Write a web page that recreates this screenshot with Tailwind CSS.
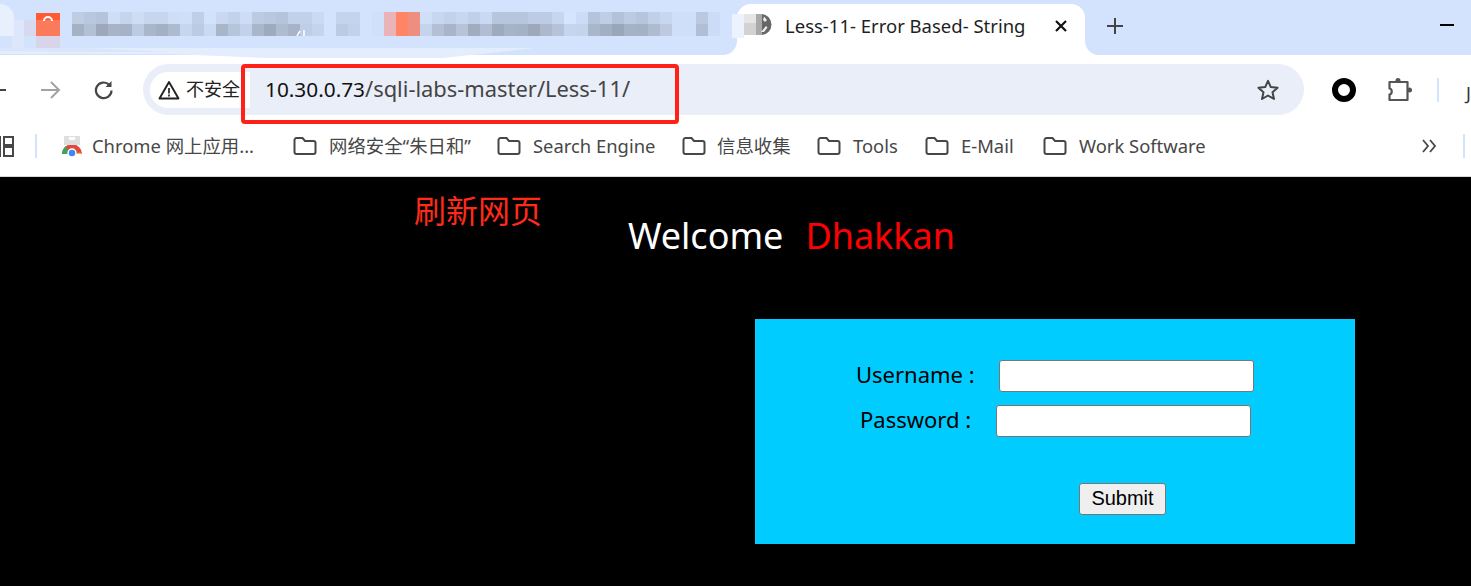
<!DOCTYPE html>
<html lang="zh">
<head>
<meta charset="utf-8">
<script src="https://cdn.jsdelivr.net/npm/@tailwindcss/browser@4"></script>
<title>Less-11</title>
</head>
<body class="relative h-[586px] w-[1471px] overflow-hidden bg-black font-['Noto_Sans','Noto_Sans_CJK_SC',sans-serif]">
<header class="flex h-[177px] flex-col bg-white">
  <!-- tab strip -->
  <div class="flex h-[55px] items-stretch bg-[#d3e3fd]">
    <div class="relative flex w-[737px] items-start pt-[12px] pl-[12px]">
      <div class="mt-[8px] h-[28px] w-[12px] bg-[#dce7fb]"></div>
      <div class="mt-[8px] h-[16px] w-[12px] bg-[#d6d9f0]"></div>
      <div class="relative mt-[1px] w-[24px]">
        <div class="h-[7px] bg-[#ff5a33]"></div>
        <div class="h-[16px] bg-[#fb7a5c]"></div>
        <div class="h-[12px] bg-[#d8d5ea]"></div>
        <svg class="absolute top-[2px] left-[7px] h-[6px] w-[10px]" viewBox="0 0 10 6"><path d="M1 6a4 4 0 0 1 8 0" fill="none" stroke="#fff" stroke-width="2"/></svg>
      </div>
      <div class="ml-[12px] w-[288px]">
        <div class="flex h-[12px]">
          <div class="w-[12px] bg-[#bfcde3]"></div><div class="w-[12px] bg-[#b9c8df]"></div><div class="w-[12px] bg-[#b5c4da]"></div><div class="w-[12px] bg-[#cfdef6]"></div><div class="w-[12px] bg-[#c5d5ec]"></div><div class="w-[12px] bg-[#cedcf4]"></div><div class="w-[12px] bg-[#c7d6ee]"></div><div class="w-[12px] bg-[#c7d6ee]"></div><div class="w-[12px] bg-[#cfdef6]"></div><div class="w-[12px] bg-[#d0dff8]"></div><div class="w-[12px] bg-[#bfcfe8]"></div><div class="w-[12px] bg-[#d3e2fb]"></div><div class="w-[12px] bg-[#c9d8f0]"></div><div class="w-[12px] bg-[#c2d2ea]"></div><div class="w-[12px] bg-[#cedcf5]"></div><div class="w-[12px] bg-[#bccbe2]"></div><div class="w-[12px] bg-[#b9c8df]"></div><div class="w-[12px] bg-[#b5c4db]"></div><div class="w-[12px] bg-[#c2d1e9]"></div><div class="w-[12px] bg-[#c2d1e9]"></div><div class="w-[12px] bg-[#cbdaf2]"></div><div class="w-[12px] bg-[#d3e3fd]"></div><div class="w-[12px] bg-[#c5d4ed]"></div><div class="w-[12px] bg-[#c5d4ed]"></div>
        </div>
        <div class="relative flex h-[12px]">
          <div class="w-[12px] bg-[#a5b2c4]"></div><div class="w-[12px] bg-[#b3c0d6]"></div><div class="w-[12px] bg-[#9da8ba]"></div><div class="w-[12px] bg-[#a7b4c8]"></div><div class="w-[12px] bg-[#a6b3c7]"></div><div class="w-[12px] bg-[#bccbe2]"></div><div class="w-[12px] bg-[#aab7cb]"></div><div class="w-[12px] bg-[#a4b1c5]"></div><div class="w-[12px] bg-[#aebbcf]"></div><div class="w-[12px] bg-[#c7d6ef]"></div><div class="w-[12px] bg-[#bccbe3]"></div><div class="w-[12px] bg-[#cbdaf3]"></div><div class="w-[12px] bg-[#a9b6ca]"></div><div class="w-[12px] bg-[#b7c5dc]"></div><div class="w-[12px] bg-[#c3d2ea]"></div><div class="w-[12px] bg-[#aab7cb]"></div><div class="w-[12px] bg-[#9eabbc]"></div><div class="w-[12px] bg-[#aebbd0]"></div><div class="w-[12px] bg-[#a7b3c6]"></div><div class="w-[12px] bg-[#bfcee6]"></div><div class="w-[12px] bg-[#c5d4ed]"></div><div class="w-[12px] bg-[#d3e3fd]"></div><div class="w-[12px] bg-[#bccbe3]"></div><div class="w-[12px] bg-[#c3d2ea]"></div>
          <svg class="absolute top-[6px] left-[224px] h-[6px] w-[10px]" viewBox="0 0 10 6"><path d="M1 6L4 1M8 0v6" fill="none" stroke="#fff" stroke-width="1.500"/></svg>
        </div>
      </div>
      <div class="ml-[12px] h-[24px] w-[12px] bg-[#d0e0fa]"></div>
      <div class="h-[24px] w-[12px] bg-[#e8b4b8]"></div>
      <div class="h-[24px] w-[12px] bg-[#ff8566]"></div>
      <div class="h-[24px] w-[12px] bg-[#ee8e80]"></div>
      <div class="w-[252px]">
        <div class="flex h-[12px]">
          <div class="w-[12px] bg-[#d0dff8]"></div><div class="w-[12px] bg-[#c8d7f0]"></div><div class="w-[12px] bg-[#c3d2ec]"></div><div class="w-[12px] bg-[#c8d7f0]"></div><div class="w-[12px] bg-[#c0d0e9]"></div><div class="w-[12px] bg-[#cad9f3]"></div><div class="w-[12px] bg-[#b7c6dd]"></div><div class="w-[12px] bg-[#b7c6dd]"></div><div class="w-[12px] bg-[#b7c6dd]"></div><div class="w-[12px] bg-[#bdcce4]"></div><div class="w-[12px] bg-[#bdcce4]"></div><div class="w-[12px] bg-[#c6d6ef]"></div><div class="w-[12px] bg-[#d6e4fd]"></div><div class="w-[12px] bg-[#cddcf6]"></div><div class="w-[12px] bg-[#b5c4da]"></div><div class="w-[12px] bg-[#bfcee6]"></div><div class="w-[12px] bg-[#b3c2d8]"></div><div class="w-[12px] bg-[#bccbe2]"></div><div class="w-[12px] bg-[#b6c5db]"></div><div class="w-[12px] bg-[#c1d0e8]"></div><div class="w-[12px] bg-[#c8d7f0]"></div>
        </div>
        <div class="flex h-[12px]">
          <div class="w-[12px] bg-[#c5d4ed]"></div><div class="w-[12px] bg-[#b2bfd5]"></div><div class="w-[12px] bg-[#a8b5c9]"></div><div class="w-[12px] bg-[#b6c3d9]"></div><div class="w-[12px] bg-[#a0adbf]"></div><div class="w-[12px] bg-[#b0bdd2]"></div><div class="w-[12px] bg-[#9eabbd]"></div><div class="w-[12px] bg-[#a7b4c8]"></div><div class="w-[12px] bg-[#a5b2c6]"></div><div class="w-[12px] bg-[#9da9bb]"></div><div class="w-[12px] bg-[#acb9cd]"></div><div class="w-[12px] bg-[#b5c2d8]"></div><div class="w-[12px] bg-[#c6d5ee]"></div><div class="w-[12px] bg-[#c5d4ed]"></div><div class="w-[12px] bg-[#aab7cb]"></div><div class="w-[12px] bg-[#a3b0c3]"></div><div class="w-[12px] bg-[#9aa7b9]"></div><div class="w-[12px] bg-[#a6b3c6]"></div><div class="w-[12px] bg-[#a5b2c5]"></div><div class="w-[12px] bg-[#aebbd0]"></div><div class="w-[12px] bg-[#bcc9e0]"></div>
        </div>
      </div>
      <div class="h-[24px] w-[24px] bg-[#d0dff9]"></div>
      <div class="w-[12px]"><div class="h-[12px] bg-[#bac9e0]"></div><div class="h-[12px] bg-[#b1bed4]"></div></div>
      <div class="h-[24px] w-[12px] bg-[#cddcf6]"></div>
      <!-- smeared edges of the blurred tabs -->
      <div class="absolute top-[4px] left-0 h-[32px] w-[14px] rounded-tr-[14px] bg-[#e8f0fe]"></div>
      <svg class="absolute top-[48px] left-0 h-[10px] w-[540px]" viewBox="0 0 540 10"><path d="M0 0H535L443 10H266L170 6H0z" fill="#e3edfd"/><path d="M0 0H85L170 4H85L0 3z" fill="#d9e5fb"/></svg>
      <div class="absolute right-0 bottom-0 h-[14px] w-[14px] bg-white"><div class="h-full w-full rounded-br-[14px] bg-[#d3e3fd]"></div></div>
    </div>
    <div class="relative mt-[4px] flex w-[348px] items-center rounded-t-[14px] bg-white pb-[7px]">
      <div class="-ml-[5px] flex h-[24px] shrink-0 items-start">
        <div class="h-[24px] w-[12px] bg-[#edf3fe]"></div>
        <div class="w-[12px]"><div class="h-[9px] bg-[#e5e5e6]"></div><div class="h-[12px] bg-[#d2d2d2]"></div></div>
        <svg class="h-[22px] w-[16px]" viewBox="0 0 16 22"><circle cx="5" cy="10.500" r="10.500" fill="#666"/><rect x="0" y="0" width="6" height="21" fill="#a9a9a9"/><path d="M8 2.500l3 3.500-2 2-2-2zM5 18l5-6 1.500 1.500L8 18z" fill="#eee"/></svg>
      </div>
      <span class="ml-[13px] w-[246px] shrink-0 text-[18.500px] leading-[22px] whitespace-nowrap text-[#1f1f1f]">Less-11- Error Based- String</span>
      <svg class="ml-[23px] h-[14px] w-[14px] shrink-0" viewBox="0 0 14 14"><path d="M2 2l10 10M12 2L2 12" stroke="#111" stroke-width="2.200"/></svg>
      <div class="absolute right-[-14px] bottom-0 h-[14px] w-[14px] bg-white"><div class="h-full w-full rounded-bl-[14px] bg-[#d3e3fd]"></div></div>
    </div>
    <svg class="mt-[17px] ml-[21px] h-[18px] w-[18px]" viewBox="0 0 18 18"><path d="M9 1v16M1 9h16" stroke="#444" stroke-width="2"/></svg>
    <div class="mt-[24px] mr-[17px] ml-auto h-[2px] w-[14px] bg-black"></div>
  </div>
  <!-- toolbar -->
  <div class="flex h-[70px] items-center pt-[9px] pb-[10px]">
    <div class="h-[2px] w-[6px] bg-[#444]"></div>
    <svg class="ml-[33px] h-[22px] w-[22px]" viewBox="0 0 22 22"><path d="M2 11h17M12 3l8 8-8 8" fill="none" stroke="#a3a3a3" stroke-width="2"/></svg>
    <svg class="ml-[32px] h-[22px] w-[22px]" viewBox="0 0 22 22"><path d="M18.500 11.500a7.800 7.800 0 1 1-2.300-5.700" fill="none" stroke="#474747" stroke-width="2.200"/><path d="M18.500 2v6h-6z" fill="#474747"/></svg>
    <div class="ml-[28px] flex h-[51px] w-[1161px] items-center rounded-full bg-[#e9eef8] pl-[7px] pr-[24px]">
      <div class="flex h-[36px] w-[100px] items-center rounded-l-full bg-white pl-[8px]">
        <svg class="h-[22px] w-[22px] shrink-0" viewBox="0 0 22 22"><path d="M11 3L20.500 19.500H1.500z" fill="none" stroke="#222" stroke-width="1.900" stroke-linejoin="round"/><path d="M11 9v5.500M11 15.500v2" stroke="#222" stroke-width="1.700"/></svg>
        <span class="ml-[6px] text-[18px] whitespace-nowrap text-[#222]">不安全</span>
      </div>
      <span class="ml-[15px] text-[21.900px] whitespace-nowrap text-[#444]"><span class="text-[20.800px] text-[#111]">10.30.0.73</span>/sqli-labs-master/Less-11/</span>
      <svg class="ml-auto h-[24px] w-[24px]" viewBox="0 0 24 24"><path d="M12 2.800l2.800 6.300 6.800.7-5.100 4.500 1.500 6.700-6-3.500-6 3.500 1.500-6.700-5.100-4.500 6.800-.7z" fill="none" stroke="#444" stroke-width="2" stroke-linejoin="round"/></svg>
    </div>
    <div class="ml-[28px] h-[24px] w-[24px] rounded-full border-[6.500px] border-black"></div>
    <svg class="ml-[31px] h-[26px] w-[26px]" viewBox="0 0 26 26"><path d="M2.500 5H20.500V23H2.500V17.500C5.500 17 5.500 12 2.500 11.500z" fill="none" stroke="#555" stroke-width="2.200" stroke-linejoin="round"/><circle cx="11" cy="3.500" r="2.500" fill="#555"/><circle cx="22.500" cy="13" r="2.500" fill="#555"/></svg>
    <div class="ml-[24px] h-[24px] w-[2px] bg-[#d3e3fd]"></div>
    <span class="mt-[8px] ml-[27px] text-[18px] text-[#333]">J</span>
  </div>
  <!-- bookmarks -->
  <div class="flex h-[51px] items-center pb-[9px] text-[18.400px] whitespace-nowrap text-[#474747]">
    <svg class="h-[22px] w-[14px] shrink-0" viewBox="0 0 14 22"><path d="M-9 2h9v8h-9zM-9 12h9v9h-9zM4 2h9v8H4zM4 12h9v9H4z" fill="none" stroke="#474747" stroke-width="2"/></svg>
    <div class="ml-[21px] h-[24px] w-[2px] bg-[#d3e3fd]"></div>
    <svg class="ml-[24px] h-[22px] w-[22px] shrink-0" viewBox="0 0 22 22"><path d="M1 19a10 10 0 0 1 20 0z" fill="#dd4b3e"/><path d="M15 19a4 4 0 0 1 6 0z" fill="#f5c33b"/><path d="M1 19a10 10 0 0 1 4-8l3 8z" fill="#3ba55d"/><circle cx="11" cy="18" r="4" fill="#4285f4" stroke="#fff" stroke-width="1.500"/><path d="M3 1h16v9H3z" fill="#dedede"/><path d="M8 2h6v3H8z" fill="#fff"/></svg>
    <span class="ml-[9px] w-[201px]">Chrome 网上应用...</span>
    <svg class="h-[20px] w-[24px] shrink-0" viewBox="0 0 24 20"><path d="M1.500 4a2 2 0 0 1 2-2h6l2.500 3h8.500a2 2 0 0 1 2 2v9a2 2 0 0 1-2 2h-17a2 2 0 0 1-2-2z" fill="none" stroke="#474747" stroke-width="2"/></svg>
    <span class="ml-[12px] w-[168px]">网络安全“朱日和”</span>
    <svg class="h-[20px] w-[24px] shrink-0" viewBox="0 0 24 20"><path d="M1.500 4a2 2 0 0 1 2-2h6l2.500 3h8.500a2 2 0 0 1 2 2v9a2 2 0 0 1-2 2h-17a2 2 0 0 1-2-2z" fill="none" stroke="#474747" stroke-width="2"/></svg>
    <span class="ml-[12px] w-[149px]">Search Engine</span>
    <svg class="h-[20px] w-[24px] shrink-0" viewBox="0 0 24 20"><path d="M1.500 4a2 2 0 0 1 2-2h6l2.500 3h8.500a2 2 0 0 1 2 2v9a2 2 0 0 1-2 2h-17a2 2 0 0 1-2-2z" fill="none" stroke="#474747" stroke-width="2"/></svg>
    <span class="ml-[11px] w-[100px]">信息收集</span>
    <svg class="h-[20px] w-[24px] shrink-0" viewBox="0 0 24 20"><path d="M1.500 4a2 2 0 0 1 2-2h6l2.500 3h8.500a2 2 0 0 1 2 2v9a2 2 0 0 1-2 2h-17a2 2 0 0 1-2-2z" fill="none" stroke="#474747" stroke-width="2"/></svg>
    <span class="ml-[12px] w-[72px]">Tools</span>
    <svg class="h-[20px] w-[24px] shrink-0" viewBox="0 0 24 20"><path d="M1.500 4a2 2 0 0 1 2-2h6l2.500 3h8.500a2 2 0 0 1 2 2v9a2 2 0 0 1-2 2h-17a2 2 0 0 1-2-2z" fill="none" stroke="#474747" stroke-width="2"/></svg>
    <span class="ml-[12px] w-[82px]">E-Mail</span>
    <svg class="h-[20px] w-[24px] shrink-0" viewBox="0 0 24 20"><path d="M1.500 4a2 2 0 0 1 2-2h6l2.500 3h8.500a2 2 0 0 1 2 2v9a2 2 0 0 1-2 2h-17a2 2 0 0 1-2-2z" fill="none" stroke="#474747" stroke-width="2"/></svg>
    <span class="ml-[12px] w-[343px]">Work Software</span>
    <svg class="h-[14px] w-[14px] shrink-0" viewBox="0 0 14 14"><path d="M1 1l5 6-5 6M8 1l5 6-5 6" fill="none" stroke="#474747" stroke-width="1.800"/></svg>
    <div class="ml-[27px] h-[24px] w-[2px] bg-[#d3e3fd]"></div>
  </div>
  <div class="h-px bg-[#d9d9d9]"></div>
</header>
<main class="relative bg-black">
  <div class="flex h-[142px] items-start pt-[33px] pl-[628px] text-[36px] leading-[52px]">
    <span class="text-white">Welcome</span><span class="ml-[22px] text-[#ff0000]">Dhakkan</span>
  </div>
  <form class="ml-[755px] h-[225px] w-[600px] bg-[#00ccff] pt-[41px] text-[22px] text-black">
    <div class="flex h-[32px] items-center pl-[101px]">
      <label class="w-[143px] pb-[4px]">Username :</label>
      <input type="text" class="h-[32px] w-[255px] rounded-[3px] border border-[#767676] bg-white">
    </div>
    <div class="mt-[13px] flex h-[32px] items-center pl-[105px]">
      <label class="w-[136px] pb-[4px]">Password :</label>
      <input type="password" class="h-[32px] w-[255px] rounded-[3px] border border-[#767676] bg-white">
    </div>
    <div class="mt-[46px] flex pl-[324px]">
      <button type="button" class="h-[32px] w-[87px] rounded-[3px] border border-[#767676] bg-[#efefef] pb-[2px] font-['Liberation_Sans',sans-serif] text-[20px] leading-none text-black">Submit</button>
    </div>
  </form>
</main>
<!-- annotations over the capture -->
<div class="absolute top-[64px] left-[241px] h-[60px] w-[438px] rounded-[4px] border-[4px] border-[#ff2117]"></div>
<div class="absolute top-[188px] left-[414px] text-[32px] leading-[46px] text-[#ff2a1a]">刷新网页</div>
</body>
</html>
